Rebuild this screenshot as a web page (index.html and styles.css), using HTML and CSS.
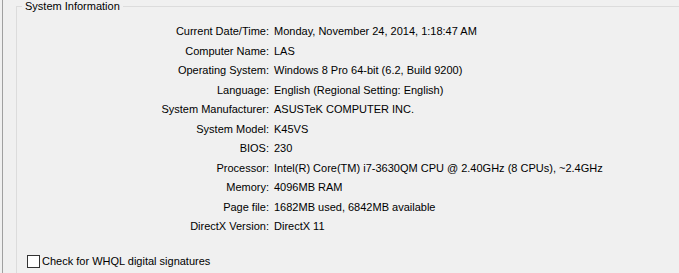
FILE: index.html
```html
<!DOCTYPE html>
<html lang="en">
<head>
  <meta charset="UTF-8" />
  <title>System Information</title>
  <link rel="stylesheet" href="styles.css">
</head>
<body>
  <div class="tab-page">
    <fieldset class="group">
      <legend>System Information</legend>
      <div class="info-grid">
        <div class="label">Current Date/Time:</div><div class="value">Monday, November 24, 2014, 1:18:47 AM</div>
        <div class="label">Computer Name:</div><div class="value">LAS</div>
        <div class="label">Operating System:</div><div class="value">Windows 8 Pro 64-bit (6.2, Build 9200)</div>
        <div class="label">Language:</div><div class="value">English (Regional Setting: English)</div>
        <div class="label">System Manufacturer:</div><div class="value">ASUSTeK COMPUTER INC.</div>
        <div class="label">System Model:</div><div class="value">K45VS</div>
        <div class="label">BIOS:</div><div class="value">230</div>
        <div class="label">Processor:</div><div class="value">Intel(R) Core(TM) i7-3630QM CPU @ 2.40GHz (8 CPUs), ~2.4GHz</div>
        <div class="label">Memory:</div><div class="value">4096MB RAM</div>
        <div class="label">Page file:</div><div class="value">1682MB used, 6842MB available</div>
        <div class="label">DirectX Version:</div><div class="value">DirectX 11</div>
      </div>
      <label class="check">
        <span class="box"></span>
        Check for WHQL digital signatures
      </label>
    </fieldset>
  </div>
</body>
</html>
```

FILE: styles.css
```css
* {
  box-sizing: border-box;
}

html, body {
  height: 100%;
}

body {
  margin: 0;
  background: #f0f0f0;
  color: #000;
  font-family: 'Liberation Sans', Arial, sans-serif;
  font-size: 11px;
  overflow: hidden;
}

.tab-page {
  height: 100%;
  margin-left: 2px;
  border-left: 1px solid #a0a0a0;
  padding: 0 0 0 13px;
}

.group {
  margin: 0;
  height: 100%;
  border: 1px solid #dcdcdc;
  border-right: none;
  border-bottom: none;
  padding: 0;
  min-width: 0;
}

.group legend {
  margin-left: 5px;
  padding: 0 3px;
  line-height: 12px;
}

.info-grid {
  display: grid;
  grid-template-columns: 252px 1fr;
  column-gap: 5px;
  margin-top: 10px;
}

.label {
  text-align: right;
  height: 19.5px;
  line-height: 19.5px;
}

.value {
  height: 19.5px;
  line-height: 19.5px;
  white-space: nowrap;
}

.check {
  display: flex;
  align-items: center;
  gap: 2px;
  margin: 18px 0 0 10px;
}

.box {
  width: 13px;
  height: 13px;
  border: 1px solid #333;
  background: #fff;
}
```
